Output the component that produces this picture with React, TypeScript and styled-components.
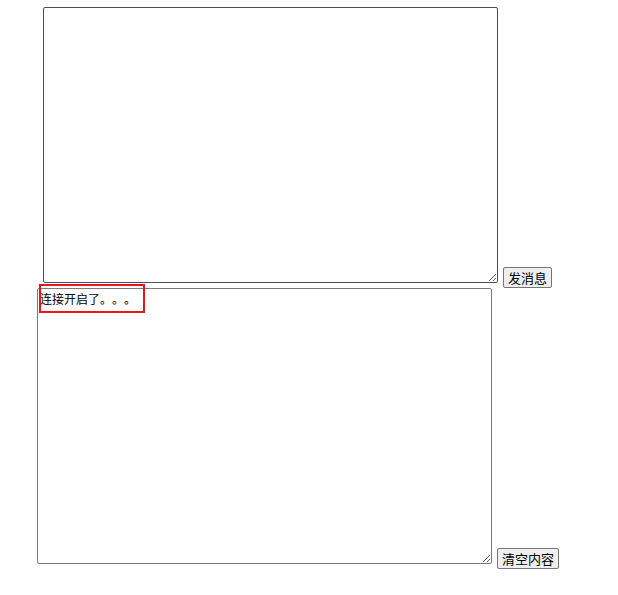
import styled, { createGlobalStyle } from 'styled-components';

const GlobalStyle = createGlobalStyle`
  html, body {
    margin: 0;
    padding: 0;
    background: #ffffff;
  }
`;

export default function App() {
  return (
    <Page>
      <GlobalStyle />
      <Row $indent={43}>
        <MessageBox $border="#4f4f4f" />
        <Button type="button">发消息</Button>
      </Row>
      <Row $indent={37}>
        <LogWrap>
          <MessageBox $border="#7a7a7a" readOnly defaultValue="连接开启了。。。" />
          <Marker />
        </LogWrap>
        <Button type="button">清空内容</Button>
      </Row>
    </Page>
  );
}

const Page = styled.div`
  padding-top: 7px;
  font-family: 'Noto Sans CJK SC', 'Noto Sans', sans-serif;
`;

const Row = styled.div<{ $indent: number }>`
  display: flex;
  align-items: flex-end;
  gap: 5px;
  padding-left: ${(p) => p.$indent}px;
`;

const LogWrap = styled.div`
  position: relative;
  display: flex;
`;

const MessageBox = styled.textarea<{ $border: string }>`
  box-sizing: border-box;
  width: 455px;
  height: 276px;
  margin: 0 0 5px 0;
  padding: 1px 2px;
  border: 1px solid ${(p) => p.$border};
  border-radius: 2px;
  background: #ffffff;
  color: #000000;
  font-family: 'Noto Sans CJK SC', sans-serif;
  font-size: 12px;
  line-height: 17px;
  text-spacing-trim: space-all;
  outline: none;
`;

const Marker = styled.div`
  position: absolute;
  left: 2px;
  top: -4px;
  width: 106px;
  height: 29px;
  box-sizing: border-box;
  border: 2px solid #e8141e;
  pointer-events: none;
`;

const Button = styled.button`
  box-sizing: border-box;
  height: 21px;
  padding: 0 4px;
  border: 1px solid #767676;
  border-radius: 2px;
  background: #efefef;
  color: #000000;
  font-family: 'Noto Sans CJK SC', sans-serif;
  font-size: 13px;
  line-height: 17px;
  white-space: nowrap;
`;
